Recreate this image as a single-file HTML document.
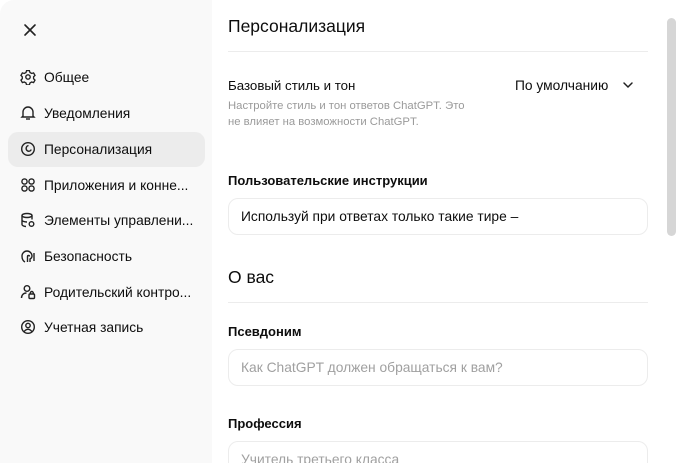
<!DOCTYPE html><html><head><meta charset="utf-8"><style>
*{margin:0;padding:0;box-sizing:border-box}
html{width:680px;height:463px;overflow:hidden}
body{width:680px;height:463px;overflow:hidden;background:#fff;font-family:"Liberation Sans","DejaVu Sans",sans-serif;color:#0d0d0d;position:relative}
.side{position:absolute;left:0;top:0;width:212px;height:463px;background:#f9f9f9;border-top-left-radius:14px}
.a{position:absolute;white-space:nowrap}
.item{position:absolute;left:8px;width:197px;height:35px;font-size:13.8px;line-height:35px;padding-left:36px}
.item svg{position:absolute;left:12px;top:9px}
.sel{background:#ececec;border-radius:10px}
.box{position:absolute;left:228px;width:420px;border:1px solid #ececec;border-radius:10px;font-size:13.8px;padding-left:12px}
.hr{position:absolute;left:228px;width:420px;height:1px;background:#ececec}
.lbl{font-size:13px;font-weight:600}
</style></head><body>
<div class="side"></div>
<svg class="a" style="left:23px;top:23px" width="14" height="14" viewBox="0 0 14 14"><path d="M2 2L12 12M12 2L2 12" stroke="#222" stroke-width="1.6" stroke-linecap="round"/></svg>
<div class="item" style="top:60px"><svg width="16" height="16" viewBox="0 0 16 16" fill="none" stroke="#222" stroke-width="1.4"><path d="M6.5 1.5h3l.6 2 1.8 1 2-.6 1.5 2.6-1.5 1.5v2l1.5 1.5-1.5 2.6-2-.6-1.8 1-.6 2h-3l-.6-2-1.8-1-2 .6L.6 11.5 2 10V8L.6 6.5 2.1 3.9l2 .6 1.8-1z" transform="scale(.95) translate(.4 .2)"/><circle cx="8" cy="8" r="2.2"/></svg>Общее</div>
<div class="item" style="top:96px"><svg width="16" height="16" viewBox="0 0 16 16" fill="none" stroke="#222" stroke-width="1.4"><path d="M3 11V7a5 5 0 0 1 10 0v4l1 1H2z"/><path d="M6 14h4"/></svg>Уведомления</div>
<div class="item sel" style="top:132px"><svg width="16" height="16" viewBox="0 0 16 16" fill="none" stroke="#222" stroke-width="1.4"><circle cx="8" cy="8" r="6.3"/><path d="M8.5 4.5C6 5 5.5 8 7 9.5s4 .5 4-1"/></svg>Персонализация</div>
<div class="item" style="top:168px"><svg width="16" height="16" viewBox="0 0 16 16" fill="none" stroke="#222" stroke-width="1.4"><circle cx="4.5" cy="4.5" r="2.6"/><circle cx="11.5" cy="4.5" r="2.6"/><circle cx="4.5" cy="11.5" r="2.6"/><circle cx="11.5" cy="11.5" r="2.6"/></svg>Приложения и конне...</div>
<div class="item" style="top:203px"><svg width="16" height="16" viewBox="0 0 16 16" fill="none" stroke="#222" stroke-width="1.4"><ellipse cx="7" cy="3.5" rx="5" ry="2"/><path d="M2 3.5v9c0 1 2 2 4 2M12 3.5v4M2 8c0 1 2 2 5 2"/><circle cx="11.5" cy="12" r="2.3"/></svg>Элементы управлени...</div>
<div class="item" style="top:239px"><svg width="16" height="16" viewBox="0 0 16 16" fill="none" stroke="#222" stroke-width="1.4"><path d="M5 14c-2-1-3-3-3-6a5 5 0 0 1 10 0c0 1.5-1 2.5-2 3v3M7.5 14V8.5a1 1 0 0 1 2 0M14 5v8"/></svg>Безопасность</div>
<div class="item" style="top:275px"><svg width="16" height="16" viewBox="0 0 16 16" fill="none" stroke="#222" stroke-width="1.4"><circle cx="7" cy="4.5" r="2.8"/><path d="M1.5 14c0-3 2-5 5-5"/><rect x="9" y="10" width="5.5" height="4.5" rx="1"/><path d="M10.3 10V9a1.5 1.5 0 0 1 3 0v1"/></svg>Родительский контро...</div>
<div class="item" style="top:310px"><svg width="16" height="16" viewBox="0 0 16 16" fill="none" stroke="#222" stroke-width="1.4"><circle cx="8" cy="8" r="6.3"/><circle cx="8" cy="6.5" r="2.2"/><path d="M4.3 12.5c1-1.5 2.3-2.2 3.7-2.2s2.7.7 3.7 2.2"/></svg>Учетная запись</div>

<div class="a" style="left:228px;top:16px;font-size:17.5px">Персонализация</div>
<div class="hr" style="top:51px"></div>
<div class="a" style="left:228px;top:78px;font-size:13.3px">Базовый стиль и тон</div>
<div class="a" style="left:228px;top:98px;font-size:11.3px;color:#9a9a9a;line-height:16px">Настройте стиль и тон ответов ChatGPT. Это<br>не влияет на возможности ChatGPT.</div>
<div class="a" style="left:515px;top:78px;font-size:13.8px">По умолчанию</div>
<svg class="a" style="left:622px;top:80px" width="12" height="10" viewBox="0 0 12 10"><path d="M2 3l4 4 4-4" stroke="#222" stroke-width="1.5" fill="none" stroke-linecap="round"/></svg>
<div class="a lbl" style="left:228px;top:173px">Пользовательские инструкции</div>
<div class="box" style="top:198px;height:37px;line-height:35px">Используй при ответах только такие тире –</div>
<div class="a" style="left:228px;top:267px;font-size:17.5px">О вас</div>
<div class="hr" style="top:302px"></div>
<div class="a lbl" style="left:228px;top:324px">Псевдоним</div>
<div class="box" style="top:349px;height:37px;line-height:35px;color:#a0a0a0">Как ChatGPT должен обращаться к вам?</div>
<div class="a lbl" style="left:228px;top:416px">Профессия</div>
<div class="box" style="top:441px;height:37px;line-height:35px;color:#a0a0a0">Учитель третьего класса</div>
<div class="a" style="left:667px;top:18px;width:9px;height:218px;background:#d6d6d6;border-radius:5px"></div>
</body></html>
